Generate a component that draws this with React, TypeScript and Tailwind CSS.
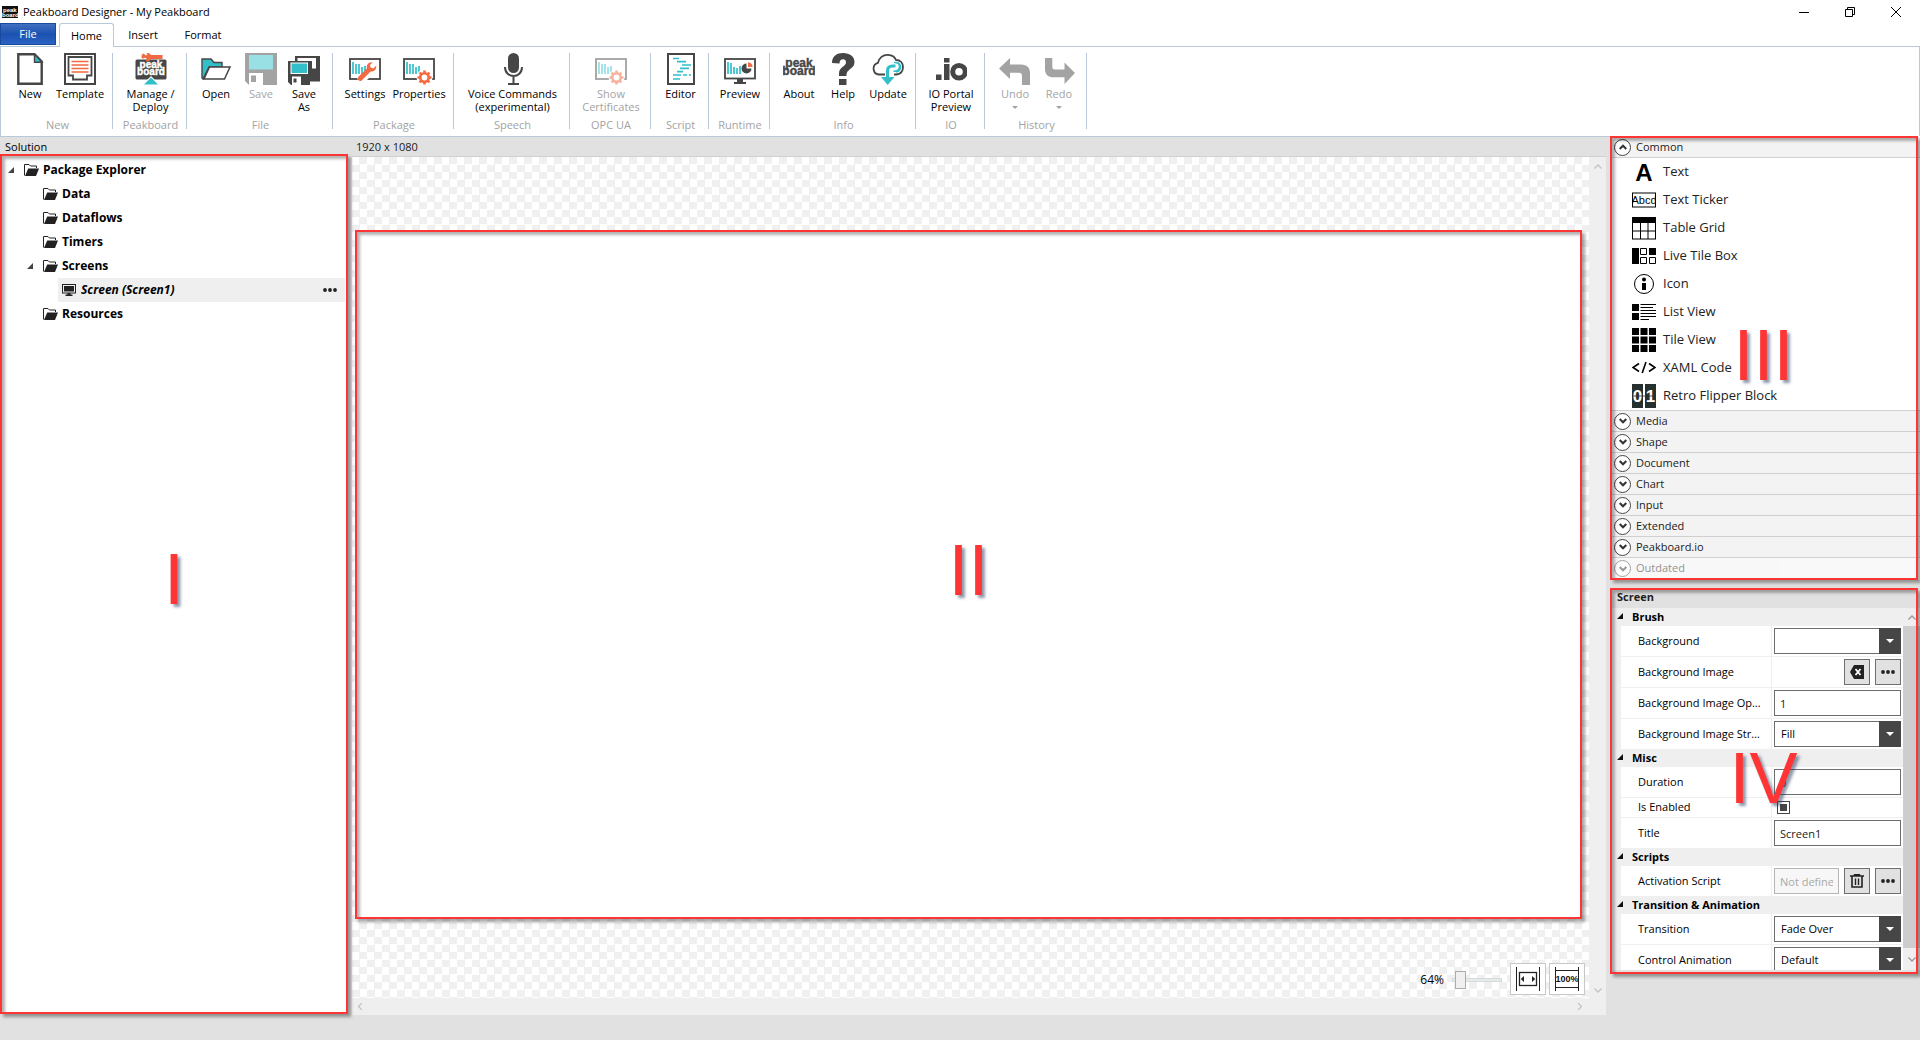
import React from "react";

const DARK = "#464646";
const TEAL = "#32bfca";
const ORANGE = "#f26a42";

type IconProps = { className?: string };

function LogoText({ fill, size = 12, x = 16, y1 = 14, y2 = 23 }: { fill: string; size?: number; x?: number; y1?: number; y2?: number }) {
  return (
    <g fill={fill} stroke={fill} strokeWidth="0.4" fontFamily="Liberation Sans, sans-serif" fontWeight="700" fontSize={size}>
      <text x={x} y={y1} textAnchor="middle">peak</text>
      <text x={x} y={y2} textAnchor="middle">board</text>
    </g>
  );
}

function AppIcon() {
  return (
    <svg viewBox="0 0 16 12" className="h-3 w-4 shrink-0" aria-hidden="true">
      <rect width="16" height="12" fill="#111" />
      <g fill="#fff" fontFamily="Liberation Sans, sans-serif" fontWeight="700" fontSize="6">
        <text x="1" y="5.5">peak</text>
        <text x="0" y="10.5">board</text>
      </g>
    </svg>
  );
}

function Ico({ children, dim }: { children: React.ReactNode; dim?: boolean }) {
  return (
    <svg viewBox="0 0 32 32" className={dim ? "size-8 shrink-0 opacity-50" : "size-8 shrink-0"} fill="none" aria-hidden="true">
      {children}
    </svg>
  );
}

const NewIcon = () => (
  <Ico>
    <path d="M4.3 1.3H20.5L27.7 8.5V30.7H4.3Z" fill="#fff" stroke={DARK} strokeWidth="2.4" />
    <path d="M20.5 1.3V9.2H28Z" fill={TEAL} stroke={DARK} strokeWidth="1.4" />
  </Ico>
);

const TemplateIcon = () => (
  <Ico>
    <rect x="1" y="1" width="30" height="30" fill="#fff" stroke={DARK} strokeWidth="2" />
    <path d="M4.5 4H27.5V22.5H23V26.5H9V22.5H4.5Z" stroke={DARK} strokeWidth="1.8" />
    <path d="M7.5 8.5H24.5M7.5 12H24.5M7.5 15.5H24.5M7.5 19H24.5" stroke={ORANGE} strokeWidth="1.7" />
  </Ico>
);

const DeployIcon = () => (
  <Ico>
    <rect x="0.5" y="6.5" width="31" height="20" rx="1.5" fill={DARK} />
    <path d="M7 5.5C6 4 6.5 1.5 8.5 0.5L11 2.5L12.5 1.2L11.5 0C14 -0.3 15.5 1 16 2H27.5V6H16C15 8 12.5 9 10.5 8.3L12 6.8L10.5 4.5L8.5 5.5Z" fill={ORANGE} />
    <LogoText fill="#fff" size={10} y1={15} y2={22} />
    <path d="M7 32L16 23L25 32Z" fill="#fff" />
    <path d="M9 31.5L16 24.5L23 31.5Z" fill={TEAL} />
  </Ico>
);

const OpenIcon = () => (
  <Ico>
    <path d="M2 25V6H11L14 9.5H22V14H9L3 26Z" fill={TEAL} stroke={DARK} strokeWidth="1.4" />
    <path d="M9.5 14H30L24.5 26H4Z" fill="#fff" stroke={DARK} strokeWidth="1.5" />
  </Ico>
);

const SaveIcon = () => (
  <Ico>
    <path d="M0 0H32V32H4L0 28Z" fill="#a3a3a3" />
    <rect x="4" y="2" width="24" height="14.5" fill="#99e0e5" />
    <rect x="4" y="20" width="14" height="12" fill="#fff" />
    <rect x="6" y="22.5" width="5" height="6.5" fill="#a3a3a3" />
  </Ico>
);

const SaveAsIcon = () => (
  <Ico>
    <path d="M7 3H32V28.5H22V8H7Z" fill={DARK} />
    <path d="M9.5 5H28V15.5H24V8H9.5Z" fill="#fff" />
    <path d="M0 8H22V32H3L0 29Z" fill={DARK} />
    <rect x="3" y="10" width="16.5" height="10.5" fill={TEAL} stroke="#fff" strokeWidth="1" />
    <rect x="4" y="23.5" width="9" height="8.5" fill="#fff" />
    <rect x="5.5" y="25.5" width="3" height="4" fill={DARK} />
  </Ico>
);

const Frame = () => (
  <>
    <rect x="1" y="6" width="30" height="20" fill="#fff" stroke={DARK} strokeWidth="1.8" />
    <path d="M4 9V21M7 11V21M10 11V21M13 14V21M16 13V21" stroke={TEAL} strokeWidth="1.7" />
  </>
);

const Gear = () => (
  <>
    <circle cx="21.5" cy="24.5" r="8" fill="#fff" />
    <circle cx="21.5" cy="24.5" r="4.2" stroke={ORANGE} strokeWidth="2.6" fill="#fff" />
    <path
      d="M21.5 17.5V20M21.5 29V31.5M14.5 24.5H17M26 24.5H28.5M16.6 19.6L18.4 21.4M24.6 27.6L26.4 29.4M16.6 29.4L18.4 27.6M24.6 21.4L26.4 19.6"
      stroke={ORANGE}
      strokeWidth="2.6"
    />
  </>
);

const SettingsIcon = () => (
  <Ico>
    <Frame />
    <path d="M8 26L18 16L27 12L28 17L15 30Z" fill="#fff" />
    <path d="M9.6 28.2A2.2 2.2 0 0 0 12.6 28.4L21.6 19.4C24.5 20.3 27.8 18 27.2 13.6L24.4 16.4L21.6 15.6L21 13L23.8 10.2C19.4 9.8 17 13 18 16.2L9.2 25A2.2 2.2 0 0 0 9.6 28.2Z" fill={ORANGE} transform="translate(0,-1)" />
  </Ico>
);

const PropertiesIcon = ({ dim }: { dim?: boolean }) => (
  <Ico dim={dim}>
    <Frame />
    <Gear />
  </Ico>
);

const MicIcon = () => (
  <Ico>
    <rect x="11" y="0" width="11" height="20" rx="5.5" fill={DARK} />
    <path d="M8 14C8 26 25 26 25 14M16.5 23V30.5M11 31H22" stroke={DARK} strokeWidth="2" />
  </Ico>
);

const EditorIcon = () => (
  <Ico>
    <rect x="3" y="1" width="26" height="30" fill="#fff" stroke={DARK} strokeWidth="2" />
    <path d="M8 5.5H14M12 8.7H21M17 12H26M15 15.3H24M12 18.7H18M8 22H16M18 22H22M24 22H26M8 26H15" stroke={TEAL} strokeWidth="1.7" />
  </Ico>
);

const PreviewIcon = () => (
  <Ico>
    <rect x="1" y="6" width="30" height="19.5" fill="#fff" stroke={DARK} strokeWidth="1.8" />
    <path d="M4 9V21M7 10V21M10 14V21M13 15V21M16 13V21" stroke={TEAL} strokeWidth="1.7" />
    <path d="M22.5 15.5V10.5A5 5 0 1 0 27.5 15.5Z" fill={DARK} />
    <path d="M24 14V9.2A5 5 0 0 1 28.6 14Z" fill={ORANGE} />
    <path d="M13 26H19V29H22V31H10V29H13Z" fill={DARK} />
  </Ico>
);

const AboutIcon = () => (
  <Ico>
    <LogoText fill={DARK} size={12} y1={14} y2={22} />
  </Ico>
);

const HelpIcon = () => (
  <Ico>
    <path d="M5 10C5 3 10 0 16 0C23 0 27.5 3.5 27.5 9C27.5 16 19.5 16 19.5 21.5V23H12V20.5C12 14 19 13.5 19 9.5C19 7.5 17.8 6.3 16 6.3C14 6.3 12.5 7.6 12.5 10.5Z" fill={DARK} />
    <rect x="12" y="26" width="7.5" height="6" fill={DARK} />
  </Ico>
);

const UpdateIcon = () => (
  <Ico>
    <path d="M13 21.5H6.5A6 6 0 0 1 6 9.8C7 5 11 1.5 16 1.8C20 2 22.8 4 24 7C28.5 7 31 10 31 14C31 18 28.5 21 24.5 21.5H22" stroke={DARK} strokeWidth="1.8" />
    <path d="M15.5 25V18C15.5 14.5 17.5 13 20.5 13H23.5" stroke={TEAL} strokeWidth="3.2" />
    <path d="M22 9.5C29 8.5 30 18.5 21.5 18.2M26 9.5C30.5 13 28.5 18.5 24 19" stroke={TEAL} strokeWidth="1.5" />
    <path d="M9 24H22.5L15.7 32Z" fill={TEAL} />
  </Ico>
);

const IoIcon = () => (
  <Ico>
    <rect x="1" y="21.5" width="5.5" height="5.5" fill={DARK} />
    <rect x="9" y="5" width="5.5" height="4.5" fill={DARK} />
    <rect x="9" y="11" width="5.5" height="16" fill={DARK} />
    <circle cx="24" cy="18.7" r="6.3" stroke={DARK} strokeWidth="5" />
  </Ico>
);

const UndoIcon = () => (
  <Ico>
    <path d="M0 15.5L11 5V11.5H22C28 11.5 31 15 31 20V32H23V23C23 20.5 22 19.8 20 19.8H11V26Z" fill="#a3a3a3" />
  </Ico>
);

const RedoIcon = () => (
  <Ico>
    <path d="M32 20L21.5 9.5V16.5H12C10 16.5 9.3 15.5 9.3 13.5V5H2V16C2 21.5 5 24.3 10.5 24.3H21.5V31Z" fill="#a3a3a3" />
  </Ico>
);

type Tool = { icon: React.ReactNode; lines: string[]; width: string; dim?: boolean; arrow?: boolean };
type Group = { name: string; width: string; pad: string; tools: Tool[] };

const groups: Group[] = [
  {
    name: "New", width: "w-[112px]", pad: "pl-[7px]",
    tools: [
      { icon: <NewIcon />, lines: ["New"], width: "w-11" },
      { icon: <TemplateIcon />, lines: ["Template"], width: "w-14" },
    ],
  },
  { name: "Peakboard", width: "w-[74px]", pad: "pl-[2px]", tools: [{ icon: <DeployIcon />, lines: ["Manage /", "Deploy"], width: "w-full" }] },
  {
    name: "File", width: "w-[146px]", pad: "pl-1",
    tools: [
      { icon: <OpenIcon />, lines: ["Open"], width: "w-[50px]" },
      { icon: <SaveIcon />, lines: ["Save"], width: "w-10", dim: true },
      { icon: <SaveAsIcon />, lines: ["Save", "As"], width: "w-[46px]" },
    ],
  },
  {
    name: "Package", width: "w-[121px]", pad: "pl-[7px]",
    tools: [
      { icon: <SettingsIcon />, lines: ["Settings"], width: "w-[50px]" },
      { icon: <PropertiesIcon />, lines: ["Properties"], width: "w-[58px]" },
    ],
  },
  { name: "Speech", width: "w-[116px]", pad: "pl-[2px]", tools: [{ icon: <MicIcon />, lines: ["Voice Commands", "(experimental)"], width: "w-full" }] },
  { name: "OPC UA", width: "w-[81px]", pad: "pl-[2px]", tools: [{ icon: <PropertiesIcon dim />, lines: ["Show", "Certificates"], width: "w-full", dim: true }] },
  { name: "Script", width: "w-[58px]", pad: "pl-[2px]", tools: [{ icon: <EditorIcon />, lines: ["Editor"], width: "w-full" }] },
  { name: "Runtime", width: "w-[61px]", pad: "pl-[2px]", tools: [{ icon: <PreviewIcon />, lines: ["Preview"], width: "w-full" }] },
  {
    name: "Info", width: "w-[146px]", pad: "pl-1",
    tools: [
      { icon: <AboutIcon />, lines: ["About"], width: "w-[50px]" },
      { icon: <HelpIcon />, lines: ["Help"], width: "w-[38px]" },
      { icon: <UpdateIcon />, lines: ["Update"], width: "w-[52px]" },
    ],
  },
  { name: "IO", width: "w-[69px]", pad: "pl-[2px]", tools: [{ icon: <IoIcon />, lines: ["IO Portal", "Preview"], width: "w-full" }] },
  {
    name: "History", width: "w-[102px]", pad: "pl-2",
    tools: [
      { icon: <UndoIcon />, lines: ["Undo"], width: "w-11", dim: true, arrow: true },
      { icon: <RedoIcon />, lines: ["Redo"], width: "w-11", dim: true, arrow: true },
    ],
  },
];

function Ribbon() {
  return (
    <div className="flex h-[91px] shrink-0 border border-[#b9c9da] bg-white pt-[6px]">
      {groups.map((g) => (
        <section key={g.name} aria-label={g.name} className={`${g.width} flex h-[76px] shrink-0 flex-col justify-between border-r border-[#b9c9da]`}>
          <div className={`${g.pad} flex`}>
            {g.tools.map((t) => (
              <button key={t.lines[0]} type="button" disabled={t.dim} className={`${t.width} flex flex-col items-center whitespace-nowrap text-[11px] leading-[13px] ${t.dim ? "text-[#a3a3a3]" : "text-black"}`}>
                {t.icon}
                <span className="mt-[2px] text-center">
                  {t.lines.map((l) => (
                    <span key={l} className="block">{l}</span>
                  ))}
                </span>
                {t.arrow && <span className="mt-[6px] size-0 border-x-[3px] border-t-[3px] border-x-transparent border-t-[#a3a3a3]" />}
              </button>
            ))}
          </div>
          <div className="pl-[2px] text-center text-[11px] leading-[9px] text-[#a3a3a3]">{g.name}</div>
        </section>
      ))}
    </div>
  );
}

function Marker({ label, className, labelClass }: { label: string; className: string; labelClass: string }) {
  return (
    <div className={`pointer-events-none absolute z-10 flex justify-center border-2 border-[#ff3535] shadow-[3px_3px_3px_rgba(0,0,0,0.35),inset_3px_3px_3px_rgba(0,0,0,0.3)] ${className}`}>
      <span className={`font-['Liberation_Sans',Arial,sans-serif] text-[72px] leading-[72px] text-[#ff3535] [text-shadow:3px_3px_3px_rgba(30,50,90,0.5)] ${labelClass}`}>{label}</span>
    </div>
  );
}

const FolderIcon = () => (
  <svg viewBox="0 0 15 12" className="h-3 w-[15px] shrink-0" aria-hidden="true">
    <path d="M0.5 11.5V0.5H5L6.5 2H12.5V4" fill="none" stroke="#222" />
    <path d="M4.2 4.5H15L12 12H1Z" fill="#222" />
  </svg>
);

const ScreenIcon = () => (
  <svg viewBox="0 0 14 12" className="h-3 w-[14px] shrink-0" aria-hidden="true">
    <rect x="0.5" y="0.5" width="13" height="8.5" fill="none" stroke="#222" />
    <rect x="2" y="2" width="10" height="5.5" fill="#222" />
    <path d="M5.5 9H8.5V10.5H10.5V12H3.5V10.5H5.5Z" fill="#222" />
  </svg>
);

const Twisty = ({ className = "" }: IconProps) => (
  <svg viewBox="0 0 6 6" className={`size-[6px] shrink-0 ${className}`} aria-hidden="true">
    <path d="M6 0V6H0Z" fill="#444" />
  </svg>
);

const Dots = () => (
  <svg viewBox="0 0 14 4" className="h-1 w-[14px]" aria-hidden="true" fill="#222">
    <circle cx="2" cy="2" r="1.9" /><circle cx="7" cy="2" r="1.9" /><circle cx="12" cy="2" r="1.9" />
  </svg>
);

const tree = [
  { label: "Package Explorer", pad: "pl-[8px]", open: true },
  { label: "Data", pad: "pl-[43px]" },
  { label: "Dataflows", pad: "pl-[43px]" },
  { label: "Timers", pad: "pl-[43px]" },
  { label: "Screens", pad: "pl-[27px]", open: true },
  { label: "Screen (Screen1)", pad: "", screen: true },
  { label: "Resources", pad: "pl-[43px]" },
];

function Solution() {
  return (
    <aside className="flex w-[352px] shrink-0 flex-col">
      <h2 className="h-[17px] pl-[5px] text-[11px] leading-[19px]">Solution</h2>
      <div className="relative mr-1 mb-px flex-1 bg-white">
        <Marker label="I" className="inset-0 items-center" labelClass="mt-[-10px]" />
        <ul className="pt-1 text-[12px] font-bold text-black">
          {tree.map((n) =>
            n.screen ? (
              <li key={n.label} className="mr-[3px] ml-[58px] flex h-6 items-center bg-[#efefef] pr-2 pl-1">
                <ScreenIcon />
                <span className="ml-[5px] flex-1 italic">{n.label}</span>
                <button type="button" aria-label="Screen menu"><Dots /></button>
              </li>
            ) : (
              <li key={n.label} className={`flex h-6 items-center ${n.pad}`}>
                {n.open && <Twisty className="mr-[10px]" />}
                <FolderIcon />
                <span className="ml-1">{n.label}</span>
              </li>
            )
          )}
        </ul>
      </div>
    </aside>
  );
}

const Chevron = ({ className = "" }: IconProps) => (
  <svg viewBox="0 0 8 5" className={`h-[5px] w-2 ${className}`} fill="none" aria-hidden="true">
    <path d="M0.5 4.5L4 1L7.5 4.5" stroke="currentColor" strokeWidth="1.3" />
  </svg>
);

function Designer() {
  return (
    <main className="flex min-w-0 flex-1 flex-col">
      <div className="h-5 border-b border-[#d0d0d0] pl-1 text-[11px] leading-[19px] text-[#222]">1920 x 1080</div>
      <div className="flex min-h-0 flex-1">
        <div className="flex min-w-0 flex-1 flex-col bg-[repeating-conic-gradient(#f0f0f0_0_25%,#ffffff_0_50%)] bg-[length:15px_15px] pt-[73px] pr-[7px] pl-[3px]">
          <div className="relative flex-1 bg-white">
            <Marker label="II" className="inset-0 items-center" labelClass="mt-[-10px]" />
          </div>
          <div className="flex h-[79px] items-end justify-end pb-[3px]">
            <label className="mr-[8px] mb-[6px] flex items-center gap-[8px] text-[12px] leading-4 text-black">
              64%
              <input
                type="range"
                min={0}
                max={100}
                defaultValue={5}
                aria-label="Zoom"
                className="h-[18px] w-[50px] appearance-none bg-transparent [&::-webkit-slider-runnable-track]:h-1 [&::-webkit-slider-runnable-track]:border [&::-webkit-slider-runnable-track]:border-[#d6dcdc] [&::-webkit-slider-runnable-track]:bg-[#e7eaea] [&::-webkit-slider-thumb]:mt-[-8px] [&::-webkit-slider-thumb]:h-[18px] [&::-webkit-slider-thumb]:w-[11px] [&::-webkit-slider-thumb]:appearance-none [&::-webkit-slider-thumb]:border [&::-webkit-slider-thumb]:border-[#acacac] [&::-webkit-slider-thumb]:bg-[#f0f0f0]"
              />
            </label>
            <div className="-mr-[3px] flex gap-[3px]">
              <button type="button" aria-label="Fit to window" className="grid h-8 w-9 place-items-center border border-[#c8c8c8] bg-white">
                <svg viewBox="0 0 24 24" className="size-6" fill="none" aria-hidden="true">
                  <path d="M0.5 0V24M23.5 0V24" stroke="#222" />
                  <rect x="3.5" y="5.5" width="17" height="13" stroke="#222" strokeWidth="1.3" />
                  <path d="M8 9V15L4.8 12ZM16 9V15L19.2 12Z" fill="#222" />
                </svg>
              </button>
              <button type="button" aria-label="Zoom to 100%" className="grid h-8 w-9 place-items-center border border-[#c8c8c8] bg-white">
                <svg viewBox="0 0 24 24" className="size-6" fill="none" aria-hidden="true">
                  <path d="M0.5 0V24M23.5 0V24M0.5 3.5H23.5M0.5 20.5H23.5" stroke="#222" />
                  <text x="12" y="15" textAnchor="middle" fontFamily="Liberation Sans, sans-serif" fontWeight="700" fontSize="9" fill="#111">100%</text>
                </svg>
              </button>
            </div>
          </div>
        </div>
        <div className="flex w-[17px] flex-col items-center justify-between bg-[#efefef] pt-[7px] pb-[5px] text-[#c4c4c4]">
          <Chevron />
          <Chevron className="rotate-180" />
        </div>
      </div>
      <div className="flex h-[17px] items-center justify-between bg-[#efefef] pr-[22px] pl-1 text-[#c4c4c4]">
        <Chevron className="-rotate-90" />
        <Chevron className="rotate-90" />
      </div>
    </main>
  );
}

const S = ({ children }: { children: React.ReactNode }) => (
  <svg viewBox="0 0 24 24" className="size-6 shrink-0" fill="none" aria-hidden="true">{children}</svg>
);

const controls: { label: string; icon: React.ReactNode }[] = [
  { label: "Text", icon: <S><text x="12" y="20.5" textAnchor="middle" fontFamily="Liberation Sans, sans-serif" fontWeight="700" fontSize="24" fill="#000">A</text></S> },
  {
    label: "Text Ticker",
    icon: (
      <S>
        <svg x="1" y="5" width="22" height="14" viewBox="0 0 22 14">
          <text x="11" y="11" textAnchor="middle" fontFamily="Liberation Sans, sans-serif" fontSize="11" fill="#000">Abcd</text>
        </svg>
        <rect x="0.5" y="5" width="23" height="14" stroke="#000" />
      </S>
    ),
  },
  {
    label: "Table Grid",
    icon: (
      <S>
        <rect x="0.5" y="1.5" width="23" height="21.5" stroke="#000" />
        <rect x="0" y="1" width="24" height="6" fill="#000" />
        <path d="M8.5 7V23M16 7V23M0 15H24" stroke="#000" />
      </S>
    ),
  },
  {
    label: "Live Tile Box",
    icon: (
      <S>
        <path d="M0 4H7V20H0ZM17 4H24V11H17Z" fill="#000" />
        <path d="M8.5 4.5H14.5V10.5H8.5ZM8.5 13.5H14.5V19.5H8.5ZM17.5 13.5H23.5V19.5H17.5Z" stroke="#000" />
      </S>
    ),
  },
  {
    label: "Icon",
    icon: (
      <S>
        <circle cx="12" cy="12" r="9.5" stroke="#000" />
        <circle cx="12" cy="7.5" r="2" fill="#000" />
        <path d="M10 11H14V18H10Z" fill="#000" />
      </S>
    ),
  },
  {
    label: "List View",
    icon: (
      <S>
        <path d="M0 4H7V11H0ZM0 13H7V20H0Z" fill="#000" />
        <path d="M8.5 4.5H24M8.5 7.5H21M8.5 10.5H24M8.5 13.5H24M8.5 16.5H24M8.5 19.5H17" stroke="#000" />
      </S>
    ),
  },
  { label: "Tile View", icon: <S><path d="M0 0H7V7H0ZM8.5 0H15.5V7H8.5ZM17 0H24V7H17ZM0 8.5H7V15.5H0ZM8.5 8.5H15.5V15.5H8.5ZM17 8.5H24V15.5H17ZM0 17H7V24H0ZM8.5 17H15.5V24H8.5ZM17 17H24V24H17Z" fill="#000" /></S> },
  { label: "XAML Code", icon: <S><path d="M7 7.5L1 11.5L7 15.5M17 7.5L23 11.5L17 15.5M14 6L10.2 17" stroke="#000" strokeWidth="1.6" /></S> },
  {
    label: "Retro Flipper Block",
    icon: (
      <S>
        <path d="M0 0H11V24H0ZM13 0H24V24H13Z" fill="#26302f" />
        <g fontFamily="Liberation Sans, sans-serif" fontWeight="700" fontSize="17" fill="#fff" textAnchor="middle">
          <text x="5.5" y="18">0</text>
          <text x="18.5" y="18">1</text>
        </g>
        <path d="M0 12H24" stroke="#26302f" strokeWidth="0.8" />
      </S>
    ),
  },
];

function SectionHead({ label, open, last }: { label: string; open?: boolean; last?: boolean }) {
  return (
    <button type="button" aria-expanded={!!open} className={`flex h-[21px] w-full items-center gap-[5px] bg-[#f3f3f3] pl-[2px] text-[11px] text-[#222] ${last ? "opacity-50" : "border-b border-[#d0d0d0]"}`}>
      <span className="grid size-[17px] place-items-center rounded-full border border-[#444] bg-white">
        <svg viewBox="0 0 8 6" className={open ? "h-[6px] w-2" : "h-[6px] w-2 rotate-180"} fill="none" aria-hidden="true">
          <path d="M0.7 5L4 1.7L7.3 5" stroke="#333" strokeWidth="2" />
        </svg>
      </span>
      {label}
    </button>
  );
}

function Toolbox() {
  return (
    <section className="relative bg-white pt-px pb-px pl-[2px]">
      <Marker label="III" className="inset-y-0 right-[2px] left-0" labelClass="ml-[-1px] mt-[181px]" />
      <SectionHead label="Common" open />
      <ul className="border-b border-[#d0d0d0]">
        {controls.map((c) => (
          <li key={c.label} className="flex h-7 items-center gap-[7px] pl-5 text-[13px] text-[#222]">
            {c.icon}
            {c.label}
          </li>
        ))}
      </ul>
      {["Media", "Shape", "Document", "Chart", "Input", "Extended", "Peakboard.io"].map((l) => (
        <SectionHead key={l} label={l} />
      ))}
      <SectionHead label="Outdated" last />
    </section>
  );
}

function Heading({ children }: { children: React.ReactNode }) {
  return (
    <h3 className="-mt-px flex h-[18px] items-center bg-[#efefef] pl-[5px] text-[11px] font-bold text-black">
      <svg viewBox="0 0 6 6" className="mb-[3px] mr-[9px] size-[6px]" aria-hidden="true"><path d="M6 0V6H0Z" fill="#111" /></svg>
      {children}
    </h3>
  );
}

function Row({ id, label, short, children }: { id: string; label: string; short?: boolean; children: React.ReactNode }) {
  return (
    <div className={`ml-[9px] flex border-b border-[#efefef] bg-white ${short ? "h-5" : "h-[31px]"}`}>
      <label htmlFor={id} className="flex w-[151px] shrink-0 items-center border-r border-[#efefef] pr-[6px] pl-[17px] text-black">
        <span className="truncate">{label}</span>
      </label>
      <div className="flex min-w-0 flex-1 items-center gap-[5px] pr-[2px] pl-[2px]">{children}</div>
    </div>
  );
}

function Select({ id, value }: { id: string; value: string }) {
  return (
    <div className="relative flex h-[26px] flex-1">
      <select id={id} defaultValue={value} className="h-full w-full appearance-none border border-[#6e6e6e] bg-white pl-[6px] text-black">
        <option value={value}>{value}</option>
      </select>
      <span className="pointer-events-none absolute inset-y-0 right-0 grid w-[22px] place-items-center bg-[#464646]">
        <span className="size-0 border-x-[4px] border-t-[4px] border-x-transparent border-t-white" />
      </span>
    </div>
  );
}

const fieldClass = "h-[26px] w-full min-w-0 border border-[#6e6e6e] bg-white pl-[5px] text-[#222]";
const squareClass = "grid size-[26px] shrink-0 place-items-center border border-[#6e6e6e] bg-[#e1e1e1]";

function Properties() {
  return (
    <section className="relative mt-2 flex h-[386px] flex-col overflow-clip pb-1 pl-[2px] [overflow-clip-margin:6px]">
      <Marker label="IV" className="inset-y-0 right-[2px] left-0" labelClass="mt-[152px] ml-[-1px]" />
      <h2 className="h-5 shrink-0 pl-[5px] text-[11px] leading-[17px] font-bold text-[#222]">Screen</h2>
      <div className="flex min-h-0 flex-1 overflow-hidden bg-[#efefef] text-[11px]">
        <div className="min-w-0 flex-1 pt-px">
          <Heading>Brush</Heading>
          <Row id="background" label="Background"><Select id="background" value="" /></Row>
          <Row id="image" label="Background Image">
            <span className="flex-1" />
            <button id="image" type="button" aria-label="Clear background image" className={squareClass}>
              <svg viewBox="0 0 14 14" className="size-[14px]" aria-hidden="true">
                <path d="M4 0H14V14H4L0 7Z" fill="#222" />
                <path d="M5.5 4L10.5 10M10.5 4L5.5 10" stroke="#fff" strokeWidth="1.8" />
              </svg>
            </button>
            <button type="button" aria-label="Choose background image" className={squareClass}><Dots /></button>
          </Row>
          <Row id="opacity" label="Background Image Opacity"><input id="opacity" type="text" defaultValue="1" className={fieldClass} /></Row>
          <Row id="stretch" label="Background Image Stretch"><Select id="stretch" value="Fill" /></Row>
          <Heading>Misc</Heading>
          <Row id="duration" label="Duration"><input id="duration" type="text" defaultValue="0" className={fieldClass} /></Row>
          <Row id="enabled" label="Is Enabled" short>
            <input id="enabled" type="checkbox" defaultChecked className="ml-[3px] grid size-[13px] appearance-none place-items-center border border-[#444] bg-white before:block before:size-[7px] before:bg-[#464646]" />
          </Row>
          <Row id="title" label="Title"><input id="title" type="text" defaultValue="Screen1" className={fieldClass} /></Row>
          <Heading>Scripts</Heading>
          <Row id="activation" label="Activation Script">
            <input id="activation" type="text" disabled placeholder="Not defined" className="h-[26px] w-full min-w-0 border border-[#b5b5b5] bg-[#f7f7f7] pr-[5px] pl-[5px] placeholder:text-[#a8a8a8]" />
            <button type="button" aria-label="Delete script" className={squareClass}>
              <svg viewBox="0 0 14 14" className="size-[14px]" fill="none" stroke="#222" aria-hidden="true">
                <path d="M0 2H14M4.5 1.5V0.7H9.5V1.5" strokeWidth="1.4" />
                <path d="M2 2V13H12V2" strokeWidth="1.6" />
                <path d="M5.5 4.5V11M8.5 4.5V11" strokeWidth="1.4" />
              </svg>
            </button>
            <button type="button" aria-label="Edit script" className={squareClass}><Dots /></button>
          </Row>
          <Heading>Transition &amp; Animation</Heading>
          <Row id="transition" label="Transition"><Select id="transition" value="Fade Over" /></Row>
          <Row id="animation" label="Control Animation"><Select id="animation" value="Default" /></Row>
        </div>
        <div className="flex w-[17px] flex-col items-center bg-[#efefef] text-[#999]">
          <span className="grid h-[18px] place-items-center"><Chevron /></span>
          <span className="w-full flex-1 bg-[#cdcdcd]" />
          <span className="grid h-[22px] place-items-center"><Chevron className="rotate-180" /></span>
        </div>
      </div>
    </section>
  );
}

export default function App() {
  return (
    <div className="flex h-screen min-h-[1000px] min-w-[1200px] flex-col overflow-hidden bg-[#e1e1e1] font-['Open_Sans','Noto_Sans',sans-serif] text-[11px] text-black">
      <header className="bg-white">
        <div className="flex h-[23px] items-center pl-[2px]">
          <AppIcon />
          <h1 className="ml-[5px] flex-1 text-[11px] leading-[22px]">Peakboard Designer - My Peakboard</h1>
          <div className="flex pr-px">
            <button type="button" aria-label="Minimize" className="grid h-5 w-[46px] place-items-center">
              <svg viewBox="0 0 10 10" className="size-[10px]" aria-hidden="true"><path d="M0 5.5H10" stroke="#000" /></svg>
            </button>
            <button type="button" aria-label="Restore" className="grid h-5 w-[46px] place-items-center">
              <svg viewBox="0 0 10 10" className="size-[10px]" fill="none" aria-hidden="true"><path d="M0.5 2.5H7.5V9.5H0.5ZM2.5 2.5V0.5H9.5V7.5H7.5" stroke="#000" /></svg>
            </button>
            <button type="button" aria-label="Close" className="grid h-5 w-[46px] place-items-center">
              <svg viewBox="0 0 10 10" className="size-[10px]" aria-hidden="true"><path d="M0 0L10 10M10 0L0 10" stroke="#000" /></svg>
            </button>
          </div>
        </div>
        <nav className="flex h-[23px] text-[11px]">
          <button type="button" className="mb-px w-14 border border-[#1a4a9c] bg-linear-to-b from-[#3f6fc0] via-[#1c52b0] to-[#2a63c4] text-white">File</button>
          <button type="button" className="relative z-10 -mb-px ml-[3px] w-[55px] rounded-t-[3px] border border-b-0 border-[#b9c9da] bg-white pt-[2px]">Home</button>
          <button type="button" className="w-[58px] pt-[2px]">Insert</button>
          <button type="button" className="w-[62px] pt-[2px]">Format</button>
        </nav>
      </header>
      <Ribbon />
      <div className="flex min-h-0 flex-1">
        <div className="flex min-w-0 flex-1 pb-[25px]">
          <Solution />
          <Designer />
        </div>
        <div className="-mt-px ml-1 w-[310px] shrink-0">
          <Toolbox />
          <Properties />
        </div>
      </div>
    </div>
  );
}
